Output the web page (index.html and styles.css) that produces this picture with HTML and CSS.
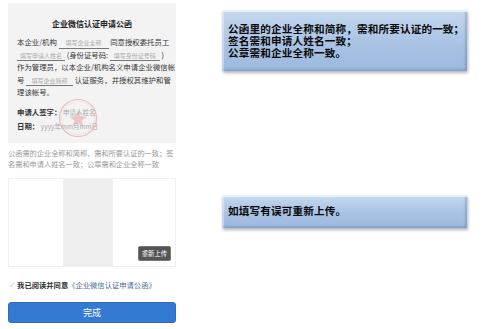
FILE: index.html
```html
<!DOCTYPE html>
<html lang="zh">
<head>
<meta charset="utf-8">
<link rel="stylesheet" href="styles.css">
</head>
<body>
<div class="page">
  <div class="left">
    <div class="letter">
      <div class="title">企业微信认证申请公函</div>
      <div class="para">
        <div class="line">本企业/机构 <span class="fill w50">填写企业全称</span> 同意授权委托员工</div>
        <div class="line"><span class="fill w48">填写申请人姓名</span> (身份证号码: <span class="fill w50">填写身份证号码</span> )</div>
        <div class="line">作为管理员，以本企业/机构名义申请企业微信帐</div>
        <div class="line">号 <span class="fill w47">填写企业简称</span> 认证服务，并授权其维护和管</div>
        <div class="line">理该帐号。</div>
      </div>
      <div class="sign">
        <div class="line">申请人签字： <span class="ph">申请人姓名</span></div>
        <div class="line">日期： <span class="ph">yyyy年mm月mm日</span></div>
        <svg class="stamp" width="40" height="40" viewBox="0 0 40 40">
          <circle cx="20" cy="20" r="18.5" fill="none" stroke="#e39a9a" stroke-width="1.2" opacity="0.6"/>
          <circle cx="20" cy="20" r="16.5" fill="none" stroke="#eab0b0" stroke-width="0.5" opacity="0.5"/>
          <polygon points="20,12 22.3,18.3 29,18.4 23.7,22.4 25.6,28.8 20,25 14.4,28.8 16.3,22.4 11,18.4 17.7,18.3" fill="#e39a9a" opacity="0.5"/>
        </svg>
      </div>
    </div>
    <div class="caption">公函需的企业全称和简称，需和所要认证的一致；签名需和申请人姓名一致；公章需和企业全称一致</div>
    <div class="upload">
      <div class="preview"></div>
      <span class="reupload">重新上传</span>
    </div>
    <div class="agree">
      <span class="check">✓</span>
      <span class="agree-text">我已阅读并同意</span><span class="link">《企业微信认证申请公函》</span>
    </div>
    <div class="done">完成</div>
  </div>
  <div class="right">
    <div class="note note1">公函里的企业全称和简称，需和所要认证的一致；<br>签名需和申请人姓名一致；<br>公章需和企业全称一致。</div>
    <div class="note note2">如填写有误可重新上传。</div>
  </div>
</div>
</body>
</html>
```

FILE: styles.css
```css
* { box-sizing: border-box; }
html, body { margin: 0; padding: 0; background: #fff; }
body { font-family: "Noto Sans CJK SC", "Noto Sans", sans-serif; width: 500px; height: 329px; overflow: hidden; }
.page { display: flex; align-items: flex-start; }
.left { width: 168px; margin-left: 8px; padding-top: 3px; display: flex; flex-direction: column; }
.letter { background: #f3f3f3; height: 140px; padding: 15px 9px 0 9px; color: #333; }
.title { text-align: center; font-size: 8px; font-weight: bold; line-height: 11px; color: #222; }
.para { margin-top: 7px; font-size: 7.4px; line-height: 12.5px; }
.line { white-space: nowrap; }
.fill { display: inline-block; border-bottom: 0.8px solid #777; color: #aaa; font-size: 6px; text-align: center; line-height: 8.5px; }
.w50 { width: 50px; }
.w48 { width: 48px; }
.w47 { width: 47px; }
.sign { position: relative; margin-top: 6px; font-size: 7.4px; line-height: 13px; font-weight: bold; color: #333; }
.ph { color: #aaa; font-weight: normal; font-size: 6.5px; }
.stamp { position: absolute; left: 41px; top: -7px; }
.caption { margin-top: 5px; font-size: 7.2px; line-height: 11px; color: #9a9a9a; }
.upload { position: relative; margin-top: 8px; height: 89px; border: 1px solid #f0f0f0; display: flex; justify-content: center; }
.preview { width: 50px; background: #efefef; margin-left: -9px; }
.reupload { position: absolute; right: 4px; bottom: 5px; background: #555; color: #fff; font-size: 6.3px; line-height: 13px; padding: 0 3px; border-radius: 2px; border: 1px solid #777; }
.agree { margin-top: 13px; display: flex; align-items: center; font-size: 7.3px; line-height: 10px; }
.check { font-size: 6px; color: #aaa; margin-left: 2px; margin-right: 3px; }
.agree-text { font-weight: bold; color: #333; }
.link { color: #4a6f9c; }
.done { margin-top: 12px; height: 21px; background: #3479d2; border: 1px solid #2f6cc0; border-radius: 3px; color: #fff; font-size: 9px; line-height: 19px; text-align: center; }
.right { margin-left: 46px; display: flex; flex-direction: column; padding-top: 10px; }
.note { width: 245px; white-space: nowrap; background: linear-gradient(#c5d8ef, #a7c1e3 60%, #9cb9df); color: #0a0a0a; font-weight: bold; font-size: 10.6px; letter-spacing: 0.15px; box-shadow: inset 0 2px 1px rgba(255,255,255,0.7), inset 2px 0 1px rgba(255,255,255,0.4), inset -2px 0 2px rgba(60,90,140,0.25), inset 0 -2px 2px rgba(60,90,140,0.2), 1px 2px 3px rgba(0,0,0,0.3); padding-left: 6px; }
.note1 { height: 61px; padding-top: 13px; line-height: 11.8px; }
.note2 { margin-top: 124px; height: 33px; padding-top: 10px; line-height: 12px; }
```
